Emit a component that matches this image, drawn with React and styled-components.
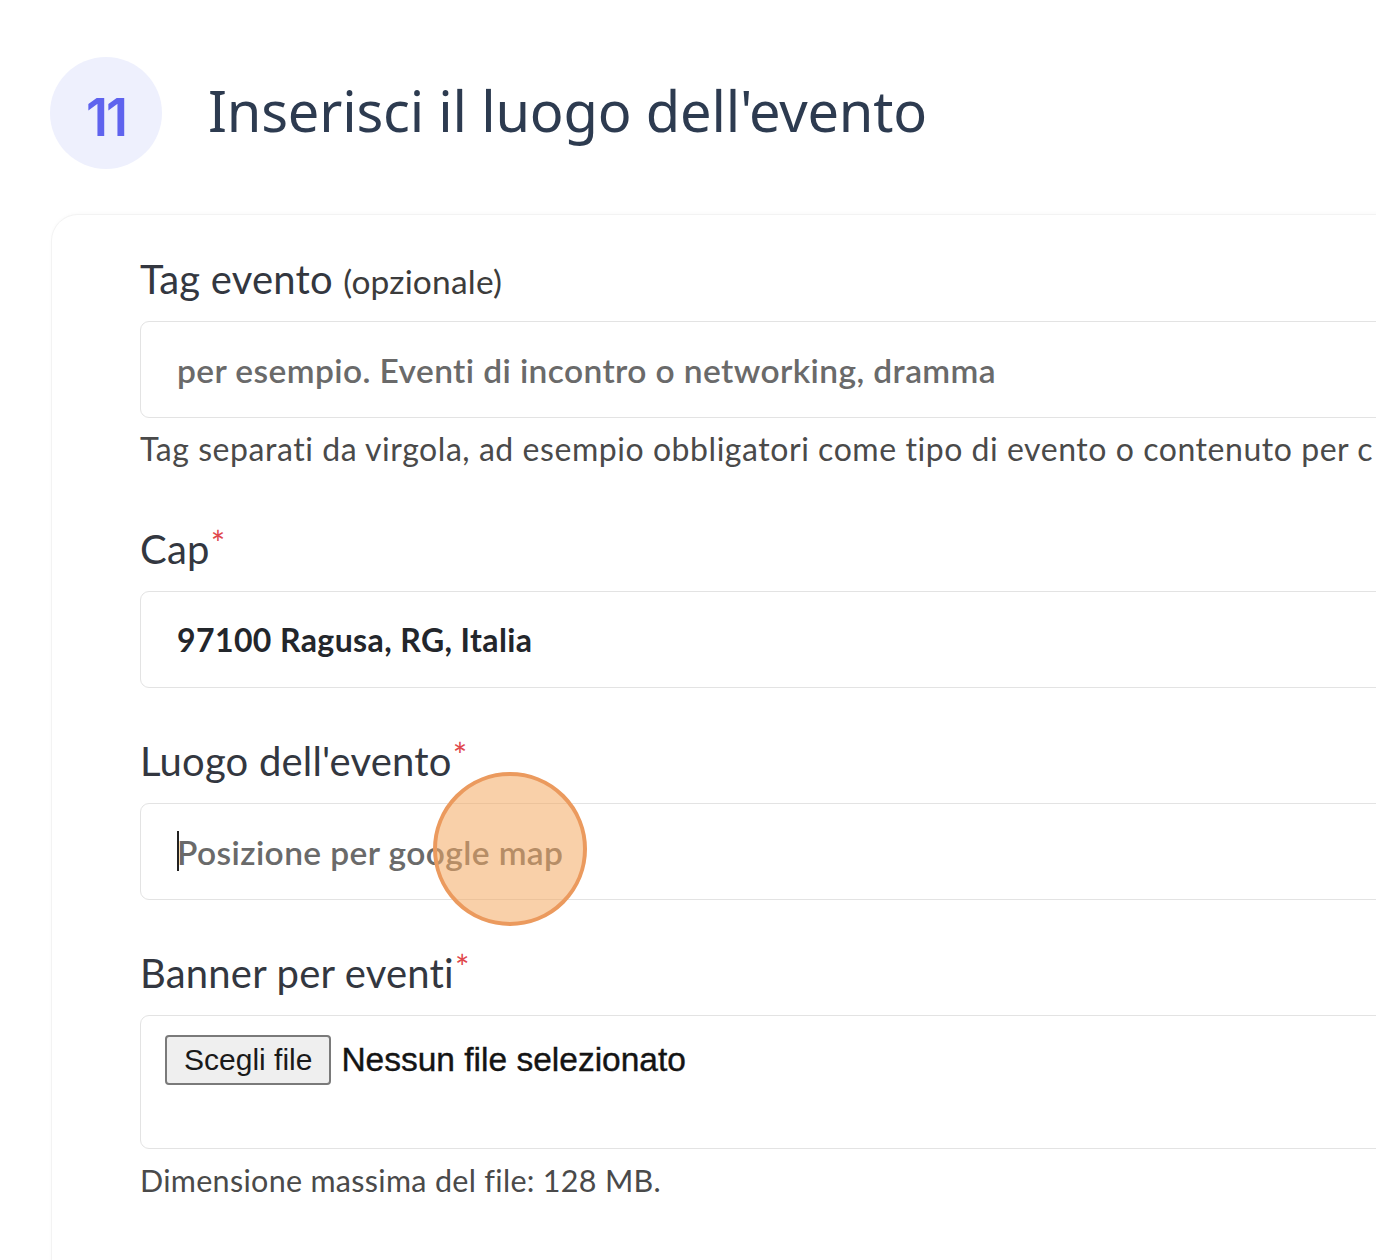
import React from "react";
import styled, { createGlobalStyle } from "styled-components";

const Global = createGlobalStyle`
  html, body { margin: 0; padding: 0; background: #ffffff; overflow: hidden; }
  body { width: 1376px; height: 1260px; }
`;

const Page = styled.div`
  width: 1376px;
  height: 1260px;
  overflow: hidden;
  padding: 57px 0 0 50px;
  box-sizing: border-box;
  font-family: "Lato", "Liberation Sans", sans-serif;
`;

const Header = styled.div`
  display: flex;
  align-items: center;
  gap: 46px;
  height: 112px;
`;

const StepBadge = styled.div`
  width: 112px;
  height: 112px;
  border-radius: 50%;
  background: #eef0fd;
  color: #5f63ee;
  display: flex;
  align-items: center;
  justify-content: center;
  font-family: "Inter", sans-serif;
  font-weight: 600;
  font-size: 52px;
  letter-spacing: -2px;
  padding-top: 8px;
  box-sizing: border-box;
`;

const Title = styled.h1`
  margin: 0;
  font-family: "Noto Sans", "Open Sans", sans-serif;
  font-weight: 400;
  font-size: 56px;
  color: #2d3b50;
  letter-spacing: -0.2px;
  margin-top: -6px;
`;

const Card = styled.div`
  margin-top: 46px;
  margin-left: 2px;
  width: 1500px;
  min-height: 1100px;
  border-radius: 26px;
  background: #ffffff;
  box-shadow: 0 0 0 1px #f3f3f3, 0 -1px 4px rgba(0, 0, 0, 0.03);
  padding: 36px 0 0 88px;
  box-sizing: border-box;
`;

const Field = styled.div`
  margin-bottom: ${(p) => p.$gap || 45}px;
  width: 1400px;
`;

const Label = styled.div`
  font-family: "Lato", sans-serif;
  font-size: 40px;
  line-height: 48px;
  height: 48px;
  padding-top: 4px;
  color: #333740;
  margin-bottom: 18px;
  letter-spacing: 0.2px;
  white-space: nowrap;
`;

const Optional = styled.span`
  font-size: 33.5px;
  color: #3c3c3c;
`;

const Star = styled.span`
  color: #e0474c;
  font-size: 34px;
  position: relative;
  top: -8px;
  margin-left: 1px;
`;

const InputWrap = styled.div`
  position: relative;
  height: ${(p) => p.$h || 97}px;
  border: 1.5px solid #e3e3e3;
  border-radius: 9px;
  box-sizing: border-box;
  display: flex;
  align-items: ${(p) => (p.$top ? "flex-start" : "center")};
  padding: ${(p) => (p.$top ? "19px 0 0 24px" : "0 0 0 36px")};
  background: #fff;
`;

const InputText = styled.span`
  font-family: "Lato", sans-serif;
  font-size: ${(p) => (p.$value ? 32 : 33.5)}px;
  font-weight: ${(p) => (p.$value ? 700 : 600)};
  color: ${(p) => (p.$value ? "#23262b" : "#6a6a6a")};
  letter-spacing: 0.4px;
  white-space: nowrap;
`;

const Caret = styled.span`
  display: inline-block;
  width: 2px;
  height: 40px;
  background: #222;
  margin-right: -2px;
  position: relative;
  top: -1px;
`;

const Help = styled.div`
  font-family: "Lato", sans-serif;
  font-size: ${(p) => p.$size || 32}px;
  line-height: 36px;
  color: #4a4a4a;
  margin-top: 13px;
  white-space: nowrap;
  letter-spacing: ${(p) => p.$ls || 0.3}px;
`;

const FileButton = styled.span`
  font-family: "Liberation Sans", Arial, sans-serif;
  font-size: 30px;
  color: #1a1a1a;
  background: #efefef;
  border: 2px solid #7a7a7a;
  border-radius: 4px;
  height: 50px;
  padding: 0 17px;
  display: inline-flex;
  align-items: center;
  box-sizing: border-box;
  flex-shrink: 0;
`;

const FileName = styled.span`
  font-family: "Liberation Sans", Arial, sans-serif;
  font-size: 33.5px;
  color: #141414;
  margin-left: 10px;
  line-height: 50px;
  white-space: nowrap;
  -webkit-text-stroke: 0.4px #141414;
`;

const ClickMarker = styled.div`
  position: absolute;
  left: 292px;
  top: -32px;
  width: 154px;
  height: 154px;
  border-radius: 50%;
  border: 4px solid #eb9a5e;
  background: rgba(244, 170, 98, 0.55);
  box-sizing: border-box;
  pointer-events: none;
`;

export default function App() {
  return (
    <>
      <Global />
      <Page>
        <Header>
          <StepBadge>11</StepBadge>
          <Title>Inserisci il luogo dell'evento</Title>
        </Header>
        <Card>
          <Field $gap={54}>
            <Label>
              Tag evento <Optional>(opzionale)</Optional>
            </Label>
            <InputWrap>
              <InputText>per esempio. Eventi di incontro o networking, dramma</InputText>
            </InputWrap>
            <Help $ls={0.55}>
              Tag separati da virgola, ad esempio obbligatori come tipo di evento o contenuto per c
            </Help>
          </Field>
          <Field>
            <Label>
              Cap<Star>*</Star>
            </Label>
            <InputWrap>
              <InputText $value>97100 Ragusa, RG, Italia</InputText>
            </InputWrap>
          </Field>
          <Field>
            <Label>
              Luogo dell'evento<Star>*</Star>
            </Label>
            <InputWrap>
              <Caret />
              <InputText>Posizione per google map</InputText>
              <ClickMarker />
            </InputWrap>
          </Field>
          <Field>
            <Label>
              Banner per eventi<Star>*</Star>
            </Label>
            <InputWrap $h={134} $top>
              <FileButton>Scegli file</FileButton>
              <FileName>Nessun file selezionato</FileName>
            </InputWrap>
            <Help $size={30.5}>Dimensione massima del file: 128 MB.</Help>
          </Field>
        </Card>
      </Page>
    </>
  );
}
